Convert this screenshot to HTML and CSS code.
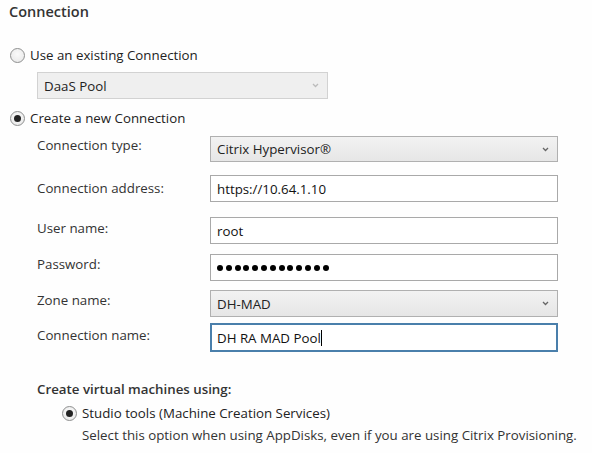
FILE: index.html
```html
<!DOCTYPE html>
<html>
<head>
<meta charset="utf-8">
<link rel="stylesheet" href="styles.css">
</head>
<body>
<div class="page">
  <h1 class="title">Connection</h1>

  <label class="radio-row r1"><span class="radio"></span><span>Use an existing Connection</span></label>
  <div class="select disabled existing"><span>DaaS Pool</span><span class="chev"><svg width="7" height="5" viewBox="0 0 7 5"><path d="M1 1 L3.5 3.5 L6 1" fill="none" stroke="currentColor" stroke-width="1.3"/></svg></span></div>

  <label class="radio-row r2"><span class="radio checked"></span><span>Create a new Connection</span></label>

  <div class="form">
    <div class="row row-type"><span class="lbl">Connection type:</span><div class="select"><span>Citrix Hypervisor®</span><span class="chev"><svg width="7" height="5" viewBox="0 0 7 5"><path d="M1 1 L3.5 3.5 L6 1" fill="none" stroke="currentColor" stroke-width="1.3"/></svg></span></div></div>
    <div class="row row-addr"><span class="lbl">Connection address:</span><div class="input">https://10.64.1.10</div></div>
    <div class="row row-user"><span class="lbl">User name:</span><div class="input">root</div></div>
    <div class="row row-pass"><span class="lbl">Password:</span><div class="input pass"><span class="dots"><i></i><i></i><i></i><i></i><i></i><i></i><i></i><i></i><i></i><i></i><i></i><i></i><i></i></span></div></div>
    <div class="row row-zone"><span class="lbl">Zone name:</span><div class="select"><span>DH-MAD</span><span class="chev"><svg width="7" height="5" viewBox="0 0 7 5"><path d="M1 1 L3.5 3.5 L6 1" fill="none" stroke="currentColor" stroke-width="1.3"/></svg></span></div></div>
    <div class="row row-name"><span class="lbl">Connection name:</span><div class="input focus">DH RA MAD Pool<span class="caret"></span></div></div>
  </div>

  <div class="vm">
    <div class="vm-title">Create virtual machines using:</div>
    <label class="radio-row r3"><span class="radio checked"></span><span>Studio tools (Machine Creation Services)</span></label>
    <div class="vm-desc">Select this option when using AppDisks, even if you are using Citrix Provisioning.</div>
  </div>
</div>
</body>
</html>
```

FILE: styles.css
```css
html, body {
  margin: 0;
  padding: 0;
  background: #fefefe;
}
body {
  font-family: "Open Sans", "Noto Sans", sans-serif;
  font-size: 13.3px;
  color: #222;
  width: 592px;
  height: 453px;
  overflow: hidden;
}
.page {
  padding: 0 0 0 9px;
  display: flex;
  flex-direction: column;
}
.title {
  margin: 3px 0 0 0;
  font-size: 14.5px;
  font-weight: 600;
  line-height: 18px;
  color: #333;
}
.radio-row {
  display: flex;
  align-items: center;
  gap: 5px;
  height: 18px;
  font-size: 13.3px;
  color: #222;
}
.r1 { margin-top: 25px; margin-left: 1px; }
.r2 { margin-top: 10px; margin-left: 1px; }
.radio {
  width: 15px;
  height: 15px;
  border: 1px solid #8e8f8f;
  border-radius: 50%;
  background: radial-gradient(circle at 50% 40%, #fafafa 0%, #e6e6e6 100%);
  display: flex;
  align-items: center;
  justify-content: center;
  box-sizing: border-box;
  flex: none;
}
.radio.checked::after {
  content: "";
  width: 7px;
  height: 7px;
  border-radius: 50%;
  background: #222;
}
.select {
  box-sizing: border-box;
  height: 27px;
  border: 1px solid #b0b0b0;
  background: linear-gradient(#f2f2f2, #e6e6e6);
  display: flex;
  align-items: center;
  justify-content: space-between;
  padding: 0 8px 0 6px;
  font-size: 13.3px;
  color: #222;
}
.select.disabled {
  border-color: #d2d2d2;
  background: #efefef;
}
.existing {
  margin-top: 8px;
  margin-left: 28px;
  width: 291px;
}
.chev {
  color: #666;
  display: flex;
}
.disabled .chev { color: #bbb; }
.form {
  margin-left: 28px;
  margin-top: 9px;
  display: flex;
  flex-direction: column;
  width: 521px;
}
.row {
  display: grid;
  grid-template-columns: 173px 348px;
  align-items: center;
}
.lbl {
  font-size: 13.3px;
  color: #333;
  align-self: start;
  line-height: 20px;
}
.row-type .select { height: 26px; }
.row-addr { margin-top: 13px; }
.row-user { margin-top: 15px; }
.row-pass { margin-top: 10px; }
.row-zone { margin-top: 9px; }
.row-name { margin-top: 6px; }
.input {
  box-sizing: border-box;
  height: 27px;
  border: 1px solid #a9a9a9;
  background: #fff;
  display: flex;
  align-items: center;
  padding: 0 6px;
  font-size: 13.3px;
  color: #111;
}
.dots {
  display: flex;
  gap: 2.8px;
}
.dots i {
  display: block;
  width: 6px;
  height: 6px;
  border-radius: 50%;
  background: #000;
}
.input.focus {
  height: 29px;
  border: 2px solid #4a7fab;
  padding-left: 5px;
}
.caret {
  display: inline-block;
  width: 1px;
  height: 16px;
  background: #000;
}
.row-type .lbl { margin-top: -1px; }
.row-addr .lbl { margin-top: 3px; }
.row-user .lbl { margin-top: 1px; }
.row-pass .lbl { margin-top: 0; }
.row-zone .lbl { margin-top: 0; }
.row-name .lbl { margin-top: 2px; }
.vm {
  margin-left: 28px;
  margin-top: 27px;
  display: flex;
  flex-direction: column;
}
.vm-title {
  font-size: 13.3px;
  font-weight: 600;
  color: #333;
  line-height: 20px;
}
.r3 {
  margin-left: 25px;
  margin-top: 5px;
}
.vm-desc {
  margin-left: 45px;
  margin-top: 4px;
  font-size: 13.3px;
  color: #333;
  line-height: 18px;
}
```
